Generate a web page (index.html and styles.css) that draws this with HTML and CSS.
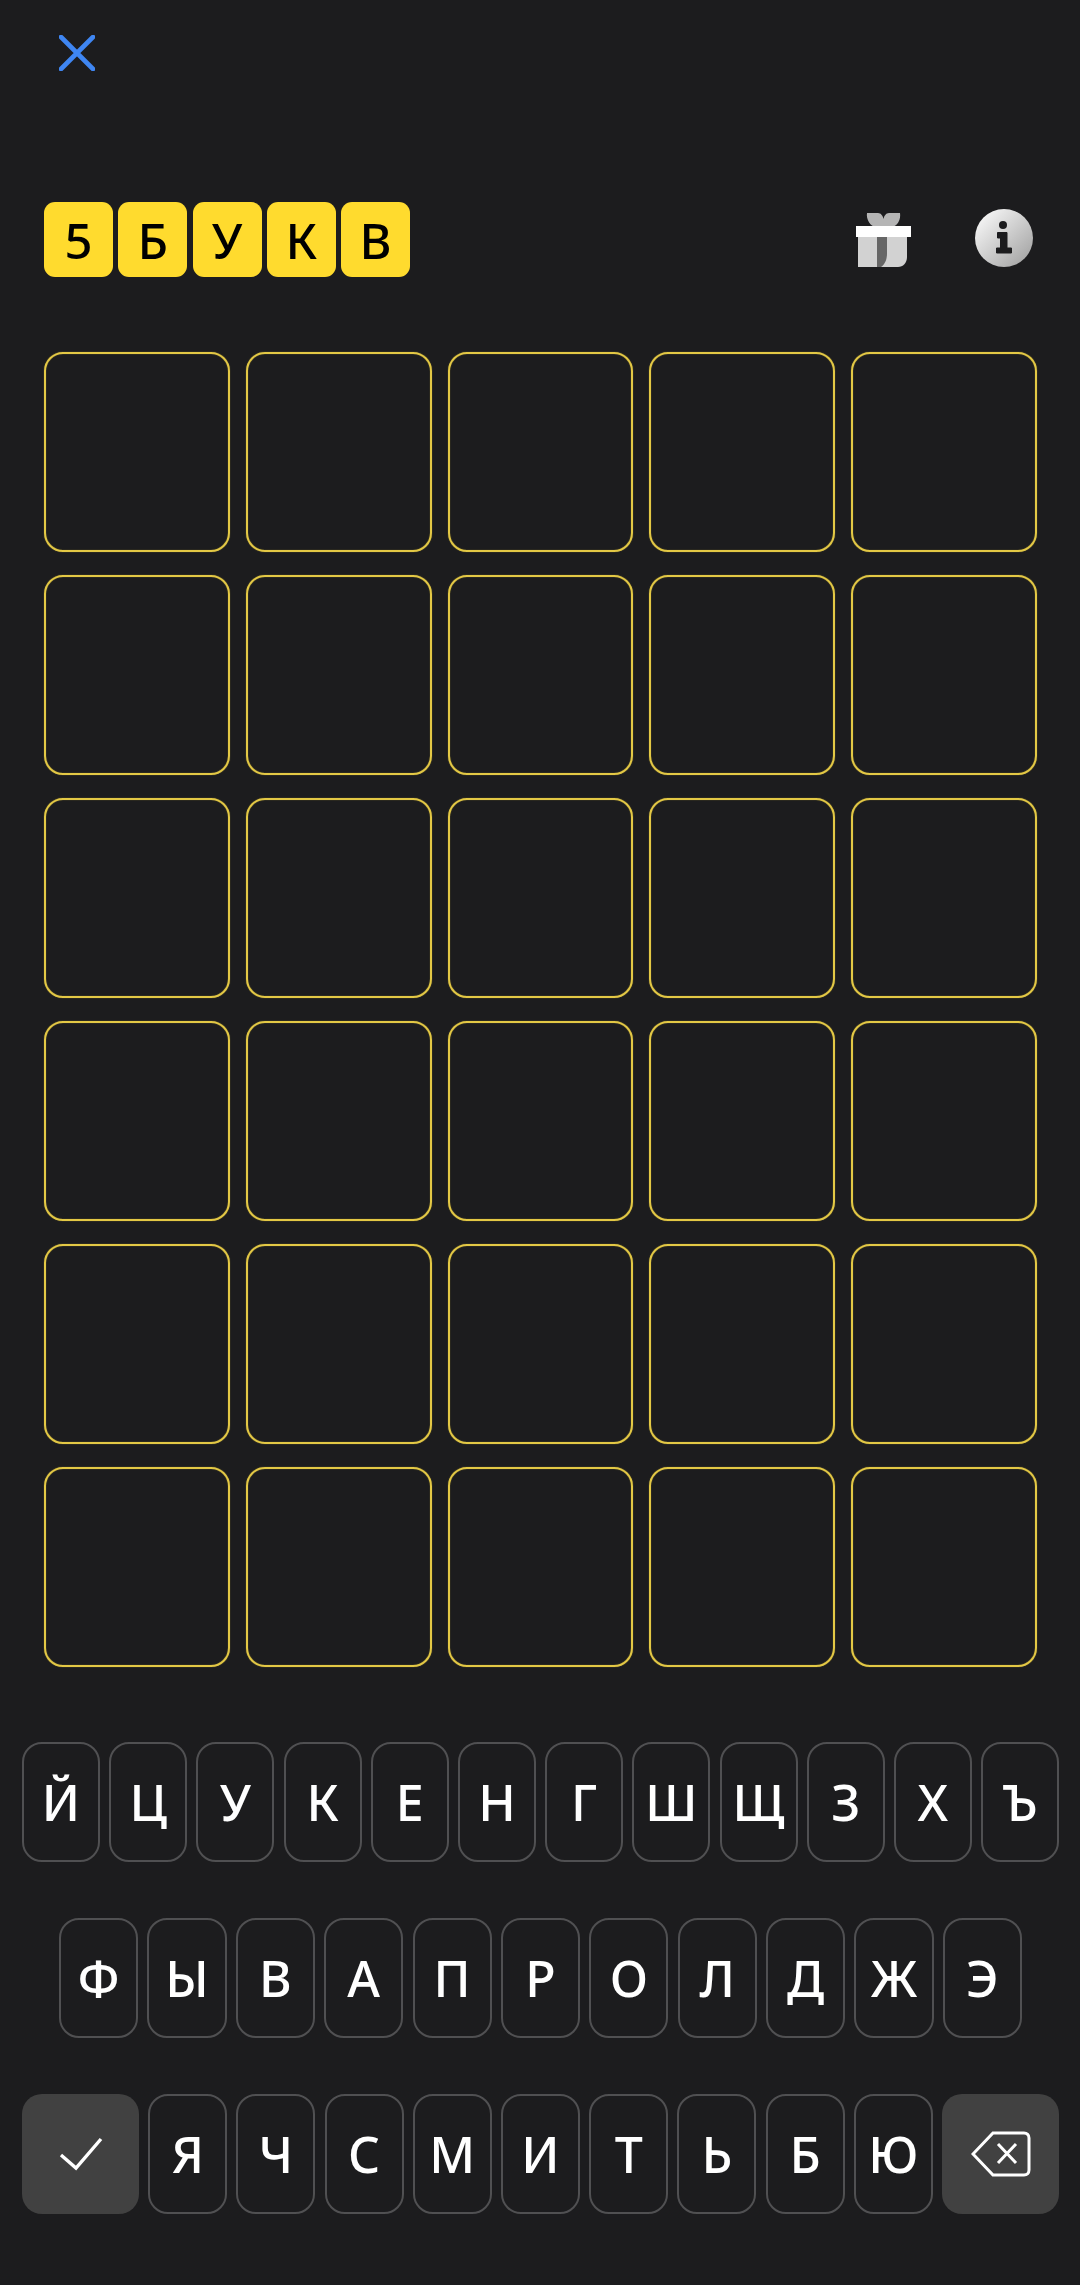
FILE: index.html
```html
<!DOCTYPE html>
<html lang="ru">
<head>
<meta charset="UTF-8">
<meta name="viewport" content="width=device-width, initial-scale=1.0">
<title>5 букв</title>
<link rel="stylesheet" href="styles.css">
</head>
<body>

<div class="app">
    <div class="topbar">
        <svg class="icon-close" width="36" height="36" viewBox="0 0 36 36">
            <path d="M2 2L34 34M34 2L2 34" fill="none" stroke="#3f86f2" stroke-width="4.6" stroke-linecap="round"/>
        </svg>
    </div>

    <div class="header">
        <div class="logo">
            <div class="chip">5</div>
            <div class="chip">Б</div>
            <div class="chip">У</div>
            <div class="chip">К</div>
            <div class="chip">В</div>
        </div>
        <div class="header-icons">
            <svg class="icon-gift" width="55" height="54" viewBox="0 0 55 54">
                <path d="M11 0H22C25 0 27 3 27.500 6C28 3 30 0 33 0H44C45 6 42 14 34 14H21C14 14 10 6 11 0Z" fill="#b5b5b5"/>
                <path d="M2 24H51V44C51 50 47 54 42 54H2Z" fill="#d2d2d2"/>
                <path d="M21 24H31V40C31 47 29 51 25 54H21Z" fill="#666"/>
                <rect x="0" y="13" width="55" height="11" fill="#fff"/>
            </svg>
            <svg class="icon-info" width="58" height="58" viewBox="0 0 58 58">
                <defs>
                    <linearGradient id="infoGrad" x1="0" y1="0" x2="1" y2="1">
                        <stop offset="0.1" stop-color="#f6f6f6"/>
                        <stop offset="0.9" stop-color="#a6a6a6"/>
                    </linearGradient>
                </defs>
                <circle cx="29" cy="29" r="29" fill="url(#infoGrad)"/>
                <circle cx="28" cy="16" r="4" fill="#1c1c1e"/>
                <path d="M22.500 23.500H32V39H36.500V44H21.500V39H25.500V29H22.500Z" fill="#1c1c1e" stroke="#1c1c1e" stroke-linejoin="round"/>
            </svg>
        </div>
    </div>

    <div class="grid" id="grid"></div>

    <div class="keyboard">
        <div class="kb-row">
            <div class="key">Й</div><div class="key">Ц</div><div class="key">У</div><div class="key">К</div><div class="key">Е</div><div class="key">Н</div><div class="key">Г</div><div class="key">Ш</div><div class="key">Щ</div><div class="key">З</div><div class="key">Х</div><div class="key">Ъ</div>
        </div>
        <div class="kb-row kb-row-mid">
            <div class="key">Ф</div><div class="key">Ы</div><div class="key">В</div><div class="key">А</div><div class="key">П</div><div class="key">Р</div><div class="key">О</div><div class="key">Л</div><div class="key">Д</div><div class="key">Ж</div><div class="key">Э</div>
        </div>
        <div class="kb-row">
            <div class="key key-action">
                <svg width="44" height="34" viewBox="0 0 44 34"><path d="M2 18L17 31L42 2" fill="none" stroke="#fff" stroke-width="3.400"/></svg>
            </div>
            <div class="key">Я</div><div class="key">Ч</div><div class="key">С</div><div class="key">М</div><div class="key">И</div><div class="key">Т</div><div class="key">Ь</div><div class="key">Б</div><div class="key">Ю</div>
            <div class="key key-action">
                <svg width="60" height="46" viewBox="0 0 60 46">
                    <path d="M22 2H53C56 2 58 4 58 7V39C58 42 56 44 53 44H22L2 23Z" fill="none" stroke="#fff" stroke-width="3"/>
                    <path d="M27 13L45 32M45 13L27 32" fill="none" stroke="#fff" stroke-width="3"/>
                </svg>
            </div>
        </div>
    </div>
</div>

<script src="script.js"></script>
</body>
</html>
```

FILE: styles.css
```css
html, body {
    margin: 0;
    padding: 0;
    background-color: #1c1c1e;
}
.app {
    width: 1080px;
    height: 2285px;
    font-family: 'Noto Sans', 'Open Sans', sans-serif;
}
.topbar {
    height: 202px;
    padding: 35px 0 0 59px;
    box-sizing: border-box;
}
.icon-close {
    display: block;
}
.header {
    display: flex;
    justify-content: space-between;
    align-items: center;
    height: 75px;
    padding: 0 47px 0 44px;
}
.logo {
    display: flex;
    gap: 5.25px;
}
.chip {
    width: 69px;
    height: 75px;
    display: flex;
    align-items: center;
    justify-content: center;
    background-color: #ffdb2e;
    border-radius: 11px;
    color: #000;
    font-size: 49px;
    font-weight: 500;
}
.header-icons {
    display: flex;
    align-items: center;
    gap: 64px;
}
.icon-gift, .icon-info {
    display: block;
}
.icon-info {
    margin-top: -3px;
}
.grid {
    display: grid;
    grid-template-columns: repeat(5, 1fr);
    grid-auto-rows: 200px;
    column-gap: 16px;
    row-gap: 23px;
    margin: 75px 43px 0 44px;
}
.cell {
    border: 2px solid #e3c845;
    border-radius: 19px;
    box-shadow: 0 0 1px rgba(227, 200, 69, 0.7), inset 0 0 1px rgba(227, 200, 69, 0.7);
}
.keyboard {
    display: flex;
    flex-direction: column;
    gap: 56px;
    margin: 75px 21px 0 22px;
}
.kb-row {
    display: flex;
    gap: 9.2px;
    height: 120px;
}
.kb-row-mid {
    padding: 0 37px;
}
.key {
    flex: 1;
    display: flex;
    align-items: center;
    justify-content: center;
    box-sizing: border-box;
    border: 2px solid #505052;
    border-radius: 20px;
    color: #fff;
    font-size: 50px;
    font-weight: 500;
}
.key-action {
    flex: 0 0 117px;
    background-color: #414141;
    border: none;
}
```

FILE: script.js
```js
const grid = document.getElementById('grid');
for (let i = 0; i < 30; i++) {
    const cell = document.createElement('div');
    cell.className = 'cell';
    grid.appendChild(cell);
}
```
